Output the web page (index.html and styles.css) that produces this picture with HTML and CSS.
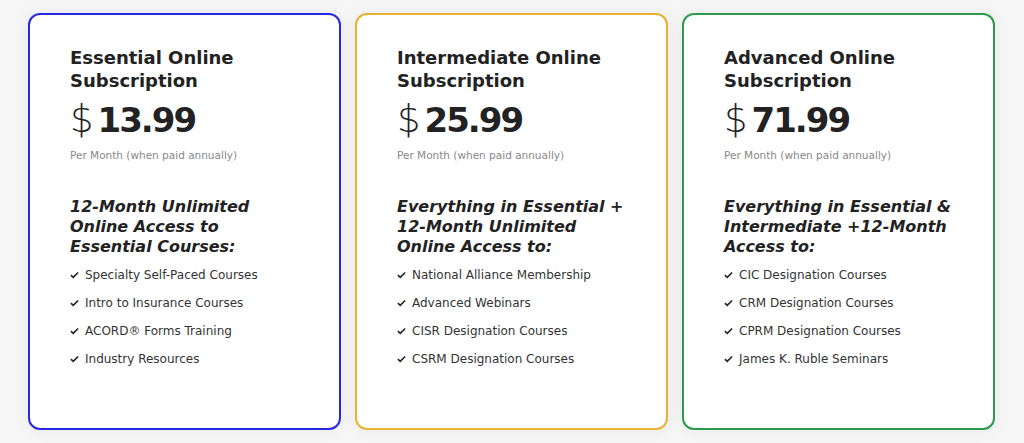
FILE: index.html
```html
<!DOCTYPE html>
<html lang="en">

<head>
    <meta charset="UTF-8">
    <meta name="viewport" content="width=device-width, initial-scale=1.0">
    <title>Online Subscriptions</title>
    <link rel="stylesheet" href="styles.css">
</head>

<body>
    <div class="plans">
        <!--Essential-->
        <div class="card blue">
            <h2>Essential Online Subscription</h2>
            <div class="price"><span class="cur">$</span>13.99</div>
            <p class="note">Per Month (when paid annually)</p>
            <h3>12-Month Unlimited Online Access to Essential Courses:</h3>
            <ul>
                <li><svg viewBox="0 0 10 8"><polyline points="1,4.2 3.6,6.6 9,1.2" /></svg>Specialty Self-Paced Courses</li>
                <li><svg viewBox="0 0 10 8"><polyline points="1,4.2 3.6,6.6 9,1.2" /></svg>Intro to Insurance Courses</li>
                <li><svg viewBox="0 0 10 8"><polyline points="1,4.2 3.6,6.6 9,1.2" /></svg>ACORD® Forms Training</li>
                <li><svg viewBox="0 0 10 8"><polyline points="1,4.2 3.6,6.6 9,1.2" /></svg>Industry Resources</li>
            </ul>
        </div>
        <!--Intermediate-->
        <div class="card yellow">
            <h2>Intermediate Online Subscription</h2>
            <div class="price"><span class="cur">$</span>25.99</div>
            <p class="note">Per Month (when paid annually)</p>
            <h3>Everything in Essential + 12-Month Unlimited Online Access to:</h3>
            <ul>
                <li><svg viewBox="0 0 10 8"><polyline points="1,4.2 3.6,6.6 9,1.2" /></svg>National Alliance Membership</li>
                <li><svg viewBox="0 0 10 8"><polyline points="1,4.2 3.6,6.6 9,1.2" /></svg>Advanced Webinars</li>
                <li><svg viewBox="0 0 10 8"><polyline points="1,4.2 3.6,6.6 9,1.2" /></svg>CISR Designation Courses</li>
                <li><svg viewBox="0 0 10 8"><polyline points="1,4.2 3.6,6.6 9,1.2" /></svg>CSRM Designation Courses</li>
            </ul>
        </div>
        <!--Advanced-->
        <div class="card green">
            <h2>Advanced Online Subscription</h2>
            <div class="price"><span class="cur">$</span>71.99</div>
            <p class="note">Per Month (when paid annually)</p>
            <h3>Everything in Essential &amp; Intermediate +12-Month Access to:</h3>
            <ul>
                <li><svg viewBox="0 0 10 8"><polyline points="1,4.2 3.6,6.6 9,1.2" /></svg>CIC Designation Courses</li>
                <li><svg viewBox="0 0 10 8"><polyline points="1,4.2 3.6,6.6 9,1.2" /></svg>CRM Designation Courses</li>
                <li><svg viewBox="0 0 10 8"><polyline points="1,4.2 3.6,6.6 9,1.2" /></svg>CPRM Designation Courses</li>
                <li><svg viewBox="0 0 10 8"><polyline points="1,4.2 3.6,6.6 9,1.2" /></svg>James K. Ruble Seminars</li>
            </ul>
        </div>
    </div>
</body>

</html>
```

FILE: styles.css
```css
* {
    margin: 0;
    padding: 0
}

ul {
    list-style: none
}

body {
    background-color: #f6f6f6;
    font-family: "DejaVu Sans", "Open Sans", sans-serif;
    color: #222;
}

.plans {
    display: flex;
    gap: 14px;
    padding: 13px 28px;
}

.card {
    width: 313px;
    height: 417px;
    box-sizing: border-box;
    padding: 31px 30px 0 40px;
    background-color: #fff;
    border: 2.5px solid #ccc;
    border-radius: 12px;
    box-shadow: 0 0 18px rgba(0, 0, 0, 0.06);
}

.blue {
    border-color: #2727e6;
}

.yellow {
    border-color: #e6b432;
}

.green {
    border-color: #2b9a4c;
}

h2 {
    font-size: 18px;
    line-height: 23px;
    font-weight: bold;
    color: #222;
    padding-right: 30px;
}

.price {
    margin-top: 8px;
    font-size: 34px;
    line-height: 40px;
    font-weight: bold;
    letter-spacing: -2px;
    color: #222;
}

.price .cur {
    font-weight: 300;
    font-size: 37px;
    letter-spacing: 0;
    margin-right: 4px;
}

.note {
    margin-top: 9px;
    font-size: 10.5px;
    color: #888;
}

h3 {
    max-width: 228px;
    margin-top: 36px;
    font-size: 16px;
    line-height: 20px;
    font-style: italic;
    font-weight: bold;
    color: #222;
}

ul {
    margin-top: 4px;
}

li {
    display: flex;
    align-items: center;
    height: 28px;
    font-size: 12px;
    color: #333;
}

li svg {
    width: 9px;
    height: 8px;
    margin-right: 6px;
    fill: none;
    stroke: #222;
    stroke-width: 1.8;
}
```
